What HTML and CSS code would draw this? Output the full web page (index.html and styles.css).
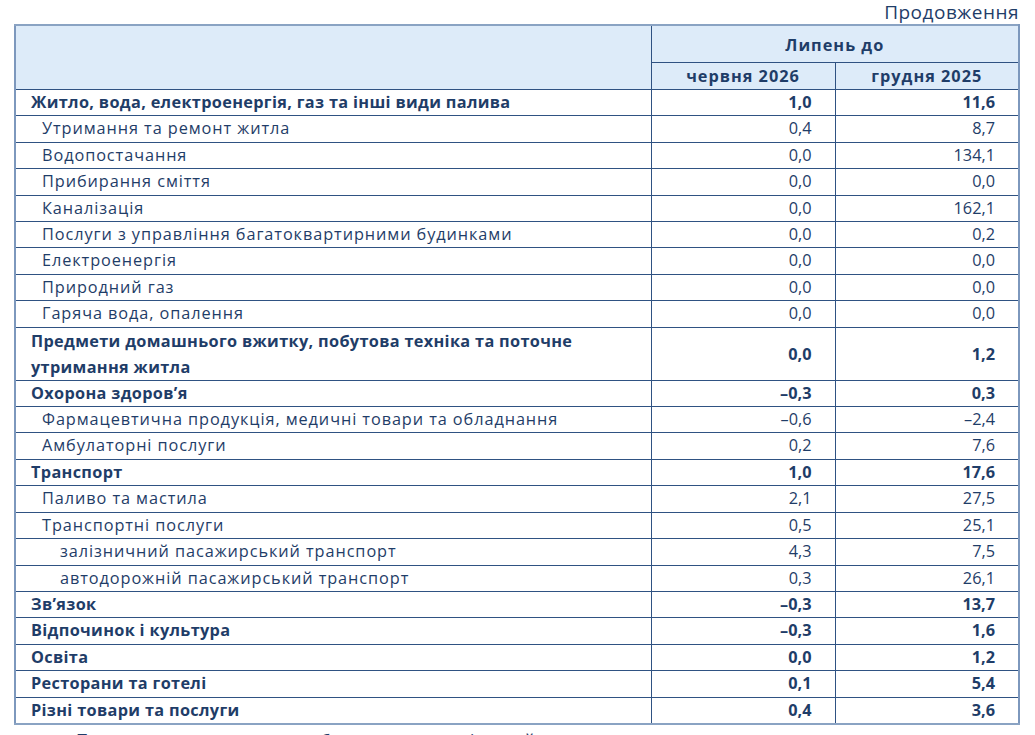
FILE: index.html
```html
<!DOCTYPE html>
<html lang="uk">
<head>
<meta charset="utf-8">
<title>Продовження</title>
<link rel="stylesheet" href="styles.css">
</head>
<body>
<div class="page">
  <div class="caption">Продовження</div>
  <table class="cpi">
    <colgroup>
      <col class="c-name">
      <col class="c-val">
      <col class="c-val">
    </colgroup>
    <thead>
      <tr class="h1">
        <th class="blank" rowspan="2"></th>
        <th colspan="2">Липень до</th>
      </tr>
      <tr class="h2">
        <th>червня 2026</th>
        <th>грудня 2025</th>
      </tr>
    </thead>
    <tbody>
      <tr class="b"><td class="l0">Житло, вода, електроенергія, газ та інші види палива</td><td>1,0</td><td>11,6</td></tr>
      <tr><td class="l1">Утримання та ремонт житла</td><td>0,4</td><td>8,7</td></tr>
      <tr><td class="l1">Водопостачання</td><td>0,0</td><td>134,1</td></tr>
      <tr><td class="l1">Прибирання сміття</td><td>0,0</td><td>0,0</td></tr>
      <tr><td class="l1">Каналізація</td><td>0,0</td><td>162,1</td></tr>
      <tr><td class="l1">Послуги з управління багатоквартирними будинками</td><td>0,0</td><td>0,2</td></tr>
      <tr><td class="l1">Електроенергія</td><td>0,0</td><td>0,0</td></tr>
      <tr><td class="l1">Природний газ</td><td>0,0</td><td>0,0</td></tr>
      <tr><td class="l1">Гаряча вода, опалення</td><td>0,0</td><td>0,0</td></tr>
      <tr class="b two"><td class="l0">Предмети домашнього вжитку, побутова техніка та поточне<br>утримання житла</td><td>0,0</td><td>1,2</td></tr>
      <tr class="b"><td class="l0">Охорона здоров’я</td><td>–0,3</td><td>0,3</td></tr>
      <tr><td class="l1">Фармацевтична продукція, медичні товари та обладнання</td><td>–0,6</td><td>–2,4</td></tr>
      <tr><td class="l1">Амбулаторні послуги</td><td>0,2</td><td>7,6</td></tr>
      <tr class="b"><td class="l0">Транспорт</td><td>1,0</td><td>17,6</td></tr>
      <tr><td class="l1">Паливо та мастила</td><td>2,1</td><td>27,5</td></tr>
      <tr><td class="l1">Транспортні послуги</td><td>0,5</td><td>25,1</td></tr>
      <tr><td class="l2">залізничний пасажирський транспорт</td><td>4,3</td><td>7,5</td></tr>
      <tr><td class="l2">автодорожній пасажирський транспорт</td><td>0,3</td><td>26,1</td></tr>
      <tr class="b"><td class="l0">Зв’язок</td><td>–0,3</td><td>13,7</td></tr>
      <tr class="b"><td class="l0">Відпочинок і культура</td><td>–0,3</td><td>1,6</td></tr>
      <tr class="b"><td class="l0">Освіта</td><td>0,0</td><td>1,2</td></tr>
      <tr class="b"><td class="l0">Ресторани та готелі</td><td>0,1</td><td>5,4</td></tr>
      <tr class="b"><td class="l0">Різні товари та послуги</td><td>0,4</td><td>3,6</td></tr>
    </tbody>
  </table>
  <p class="note">Показники розраховано за базою минулого і новий кошик</p>
</div>
</body>
</html>
```
FILE: styles.css
```css
html, body {
  margin: 0;
  padding: 0;
  background: #ffffff;
}

body {
  font-family: "Open Sans", "Noto Sans", sans-serif;
  color: #1f3d68;
  font-size: 16.3px;
}

.page {
  width: 1006px;
  padding-left: 14px;
  padding-top: 0;
}

.caption {
  text-align: right;
  font-size: 19px;
  letter-spacing: 0.5px;
  line-height: 24px;
  height: 24px;
  padding-right: 1px;
}

.cpi {
  width: 1006px;
  border-collapse: collapse;
  table-layout: fixed;
  border-left: 2px solid #7d98bd;
  border-right: 2px solid #7d98bd;
  border-top: 2px solid #8aa3c3;
  border-bottom: 2px solid #8aa3c3;
}

.c-name { width: 636px; }
.c-val { width: 184px; }

.cpi th {
  background: #ddebf9;
  font-weight: 700;
  letter-spacing: 1px;
  padding: 0;
  text-align: center;
  border-left: 1px solid #2f5282;
  border-bottom: 1px solid #2f5282;
}

.cpi th.blank {
  border-left: none;
}

.h1 th {
  height: 34px;
  line-height: 20px;
  padding-top: 2px;
}

.h2 th {
  height: 26px;
  line-height: 26px;
}

.cpi td {
  padding: 0 23px 0 0;
  height: 25.4px;
  line-height: 25.4px;
  text-align: right;
  border-bottom: 1px solid #2f5282;
  border-left: 1px solid #2f5282;
  white-space: nowrap;
}

.cpi td.l0,
.cpi td.l1,
.cpi td.l2 {
  text-align: left;
  border-left: none;
  padding-right: 0;
  letter-spacing: 0.92px;
}

.cpi td.l0 { padding-left: 15px; }
.cpi td.l1 { padding-left: 26px; }
.cpi td.l2 { padding-left: 44px; }

.b td {
  font-weight: 700;
}

.cpi .b td.l0 {
  letter-spacing: 0.33px;
}

.two td {
  line-height: 26px;
  height: 52px;
}

.note {
  margin: 5px 0 0 62px;
  font-size: 17px;
  letter-spacing: 0.6px;
  line-height: 20px;
  white-space: nowrap;
}
```
